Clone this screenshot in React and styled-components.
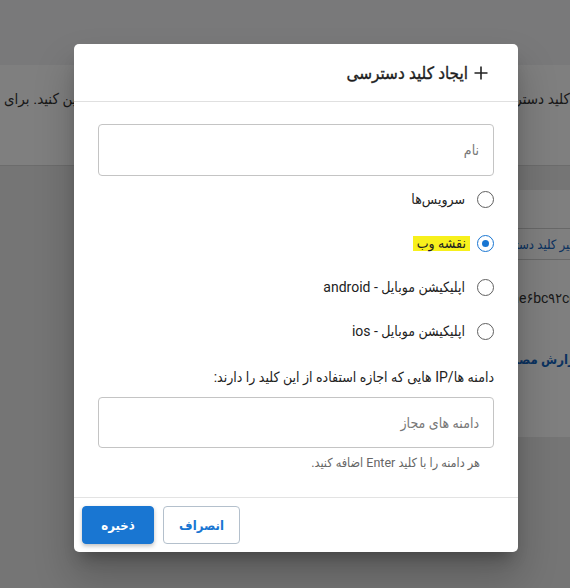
import React from 'react';
import styled, { createGlobalStyle } from 'styled-components';

const Global = createGlobalStyle`
  html, body { margin: 0; padding: 0; }
  body {
    width: 570px;
    height: 588px;
    overflow: hidden;
    font-family: Roboto, "DejaVu Sans Condensed", "DejaVu Sans", sans-serif;
  }
  #root { height: 100%; }
  * { box-sizing: border-box; }
`;

const Page = styled.div`
  position: relative;
  width: 570px;
  height: 588px;
  overflow: hidden;
  background: #eaeaea;
  direction: rtl;
  display: flex;
  flex-direction: column;
`;

const TopBar = styled.div`
  height: 65px;
  flex-shrink: 0;
  background: #f3f3f5;
`;

const Notice = styled.div`
  height: 101px;
  flex-shrink: 0;
  background: #ffffff;
  border-bottom: 1px solid #d8d8d8;
  display: flex;
  justify-content: space-between;
  align-items: flex-start;
  padding: 24px 0 0 4px;
  white-space: nowrap;
  font-size: 15px;
  line-height: 20px;
  color: #333;
`;

const NoticePart = styled.span`
  flex: none;
  margin-right: ${(p) => p.$pull || 0}px;
`;

const Card = styled.div`
  margin: 24px -30px 0 110px;
  height: 247px;
  background: #ffffff;
  display: flex;
  flex-direction: column;
  white-space: nowrap;
  overflow: hidden;
`;

const CardHead = styled.div`
  height: 38px;
`;

const CardAction = styled.div`
  height: 32px;
  padding-right: 18px;
  border-top: 1px solid #d0d0d0;
  border-bottom: 1px solid #d0d0d0;
  display: flex;
  align-items: center;
  font-size: 13px;
  color: #1565c0;
`;

const CardKey = styled.div`
  height: 76px;
  padding-right: 15px;
  display: flex;
  align-items: center;
  font-size: 14px;
  color: #333;
`;

const KeyText = styled.span`
  direction: ltr;
  unicode-bidi: isolate;
`;

const CardLink = styled.div`
  height: 46px;
  padding-right: 18px;
  display: flex;
  align-items: center;
  font-size: 13px;
  font-weight: 700;
  color: #1565c0;
`;

const Overlay = styled.div`
  position: absolute;
  inset: 0;
  background: rgba(0, 0, 0, 0.5);
  direction: ltr;
  display: flex;
  align-items: flex-start;
  padding: 44px 0 0 74px;
`;

const Modal = styled.div`
  width: 444px;
  direction: rtl;
  background: #ffffff;
  border-radius: 5px;
  box-shadow: 0 11px 15px -7px rgba(0, 0, 0, 0.3), 0 24px 38px 3px rgba(0, 0, 0, 0.2);
  display: flex;
  flex-direction: column;
  color: #222;
`;

const Header = styled.div`
  height: 58px;
  padding: 0 29px 0 24px;
  border-bottom: 1px solid #e0e0e0;
  display: flex;
  align-items: center;
  gap: 5px;
  font-size: 17px;
  font-weight: 400;
  color: #1e1e1e;
  -webkit-text-stroke: 0.35px #1e1e1e;
`;

const Body = styled.div`
  padding: 22px 24px 26px;
  display: flex;
  flex-direction: column;
`;

const Field = styled.div`
  height: 52px;
  border: 1px solid #c4c4c4;
  border-radius: 4px;
  padding: 0 14px;
  display: flex;
  align-items: center;
  font-size: 14px;
  color: #777;
`;

const RadioGroup = styled.div`
  margin-top: 1px;
  display: flex;
  flex-direction: column;
`;

const RadioRow = styled.label`
  height: 44px;
  display: flex;
  align-items: center;
  gap: 12px;
  font-size: 14px;
  color: #222;
`;

const RadioCircle = styled.span`
  width: 17px;
  height: 17px;
  border-radius: 50%;
  border: 1.7px solid ${(p) => (p.$checked ? '#1976d2' : '#5f5f5f')};
  display: flex;
  align-items: center;
  justify-content: center;
  flex-shrink: 0;
  &::after {
    content: '';
    width: 7px;
    height: 7px;
    border-radius: 50%;
    background: ${(p) => (p.$checked ? '#1976d2' : 'transparent')};
  }
`;

const Mark = styled.span`
  background: #f7f01c;
  padding: 0 4px;
  margin-right: -5px;
  line-height: 15px;
`;

const Latin = styled.span`
  direction: ltr;
  unicode-bidi: isolate;
`;

const Label = styled.div`
  margin-top: 14px;
  font-size: 14px;
  line-height: 20px;
  color: #222;
`;

const DomainField = styled(Field)`
  margin-top: 10px;
  height: 51px;
`;

const Hint = styled.div`
  margin-top: 7px;
  padding-right: 14px;
  font-size: 12.5px;
  line-height: 16px;
  color: #666;
`;

const Footer = styled.div`
  border-top: 1px solid #e3e3e3;
  padding: 8px;
  display: flex;
  justify-content: flex-end;
  gap: 9px;
`;

const Button = styled.button`
  height: 38px;
  width: ${(p) => (p.$primary ? 72 : 77)}px;
  padding: 0;
  border-radius: 4px;
  font-family: inherit;
  font-size: 13px;
  font-weight: 700;
  cursor: pointer;
  border: 1px solid ${(p) => (p.$primary ? '#1976d2' : '#b4c0cc')};
  background: ${(p) => (p.$primary ? '#1976d2' : '#ffffff')};
  color: ${(p) => (p.$primary ? '#ffffff' : '#1976d2')};
  box-shadow: ${(p) => (p.$primary ? '0 2px 4px rgba(0,0,0,0.25)' : 'none')};
`;

const PlusIcon = () => (
  <svg width="16" height="16" viewBox="0 0 16 16" aria-hidden="true">
    <path d="M8 1.5v13M1.5 8h13" stroke="#222" strokeWidth="1.6" fill="none" />
  </svg>
);

const options = [
  { label: 'سرویس‌ها' },
  { label: 'نقشه وب', checked: true, mark: true },
  { label: 'اپلیکیشن موبایل - ', latin: 'android' },
  { label: 'اپلیکیشن موبایل - ', latin: 'ios' },
];

export default function App() {
  return (
    <>
      <Global />
      <Page>
        <TopBar />
        <Notice>
          <NoticePart $pull={-26}>ابتدا کلید دسترسی خود را ایجاد کنید</NoticePart>
          <NoticePart>سرویس‌ها را تعیین کنید. برای</NoticePart>
        </Notice>
        <Card>
          <CardHead />
          <CardAction>تغییر کلید دسترسی</CardAction>
          <CardKey>
            <KeyText>3f7d1ae۶bc۹۲cd4</KeyText>
          </CardKey>
          <CardLink>گزارش مصرف</CardLink>
        </Card>
        <Overlay>
          <Modal>
            <Header>
              <PlusIcon />
              <span>ایجاد کلید دسترسی</span>
            </Header>
            <Body>
              <Field>نام</Field>
              <RadioGroup>
                {options.map((o, i) => (
                  <RadioRow key={i}>
                    <RadioCircle $checked={o.checked} />
                    {o.mark ? (
                      <Mark>{o.label}</Mark>
                    ) : (
                      <span>
                        {o.label}
                        {o.latin && <Latin>{o.latin}</Latin>}
                      </span>
                    )}
                  </RadioRow>
                ))}
              </RadioGroup>
              <Label>دامنه ها/IP هایی که اجازه استفاده از این کلید را دارند:</Label>
              <DomainField>دامنه های مجاز</DomainField>
              <Hint>هر دامنه را با کلید Enter اضافه کنید.</Hint>
            </Body>
            <Footer>
              <Button>انصراف</Button>
              <Button $primary>ذخیره</Button>
            </Footer>
          </Modal>
        </Overlay>
      </Page>
    </>
  );
}
